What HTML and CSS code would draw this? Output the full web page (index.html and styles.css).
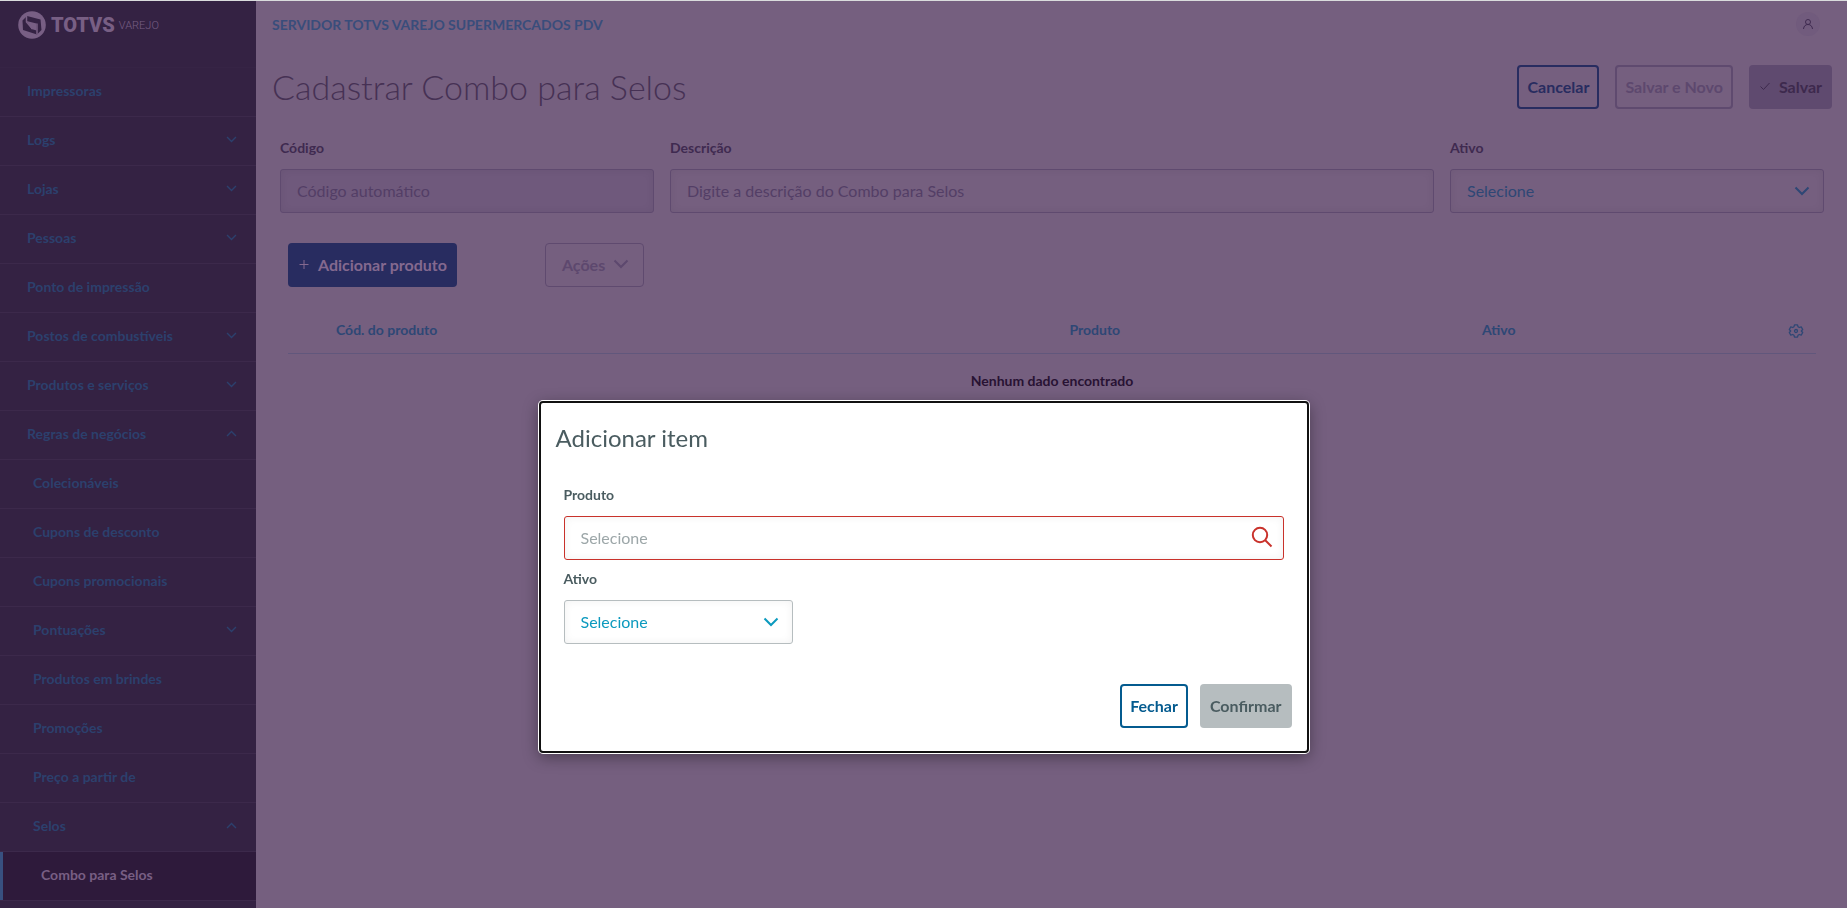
FILE: index.html
```html
<!DOCTYPE html>
<html lang="pt-BR">
<head>
  <meta charset="UTF-8">
  <title>Cadastrar Combo para Selos</title>
  <link rel="stylesheet" href="styles.css">
</head>
<body>

  <svg class="sprite" aria-hidden="true">
    <symbol id="down" viewBox="0 0 16 16"><path d="M1.500 4.500l6.500 6.500 6.500-6.500"/></symbol>
    <symbol id="up" viewBox="0 0 16 16"><path d="M1.500 11.500l6.500-6.500 6.500 6.500"/></symbol>
  </svg>

  <div class="app">
    <aside class="sidebar">
      <div class="brand">
        <svg class="brand-icon" viewBox="0 0 28 28">
          <circle class="light" cx="14" cy="14" r="13.800"/>
          <path class="dark" d="M4.500 9.500L9 5l13.500 3.500L23.500 19 19 23.500 5 19z"/>
          <path class="light" d="M8.500 10l10 2.500V19.500l-5-1.500z"/>
          <path d="M8.500 5v6l6 7M19 12.500v11" stroke-width="1.500"/>
        </svg>
        <span class="brand-name">TOTVS</span>
        <span class="brand-sub">VAREJO</span>
      </div>
      <nav>
        <ul class="menu">
          <li class="spacer"></li>
          <li><a href="#">Impressoras</a></li>
          <li><a href="#">Logs<svg><use href="#down"/></svg></a></li>
          <li><a href="#">Lojas<svg><use href="#down"/></svg></a></li>
          <li><a href="#">Pessoas<svg><use href="#down"/></svg></a></li>
          <li><a href="#">Ponto de impressão</a></li>
          <li><a href="#">Postos de combustíveis<svg><use href="#down"/></svg></a></li>
          <li><a href="#">Produtos e serviços<svg><use href="#down"/></svg></a></li>
          <li><a href="#">Regras de negócios<svg><use href="#up"/></svg></a></li>
          <li class="sub"><a href="#">Colecionáveis</a></li>
          <li class="sub"><a href="#">Cupons de desconto</a></li>
          <li class="sub"><a href="#">Cupons promocionais</a></li>
          <li class="sub"><a href="#">Pontuações<svg><use href="#down"/></svg></a></li>
          <li class="sub"><a href="#">Produtos em brindes</a></li>
          <li class="sub"><a href="#">Promoções</a></li>
          <li class="sub"><a href="#">Preço a partir de</a></li>
          <li class="sub"><a href="#">Selos<svg><use href="#up"/></svg></a></li>
          <li class="active"><a href="#">Combo para Selos</a></li>
        </ul>
      </nav>
    </aside>

    <main class="content">
      <header class="topbar">
        <span>SERVIDOR TOTVS VAREJO SUPERMERCADOS PDV</span>
        <button class="avatar" aria-label="Usuário">
          <svg viewBox="0 0 12 12"><circle cx="6" cy="4" r="2.500"/><path d="M1.500 11c.3-3 2-4.500 4.500-4.500s4.200 1.500 4.500 4.500"/></svg>
        </button>
      </header>

      <div class="page-head">
        <h1>Cadastrar Combo para Selos</h1>
        <div class="actions">
          <button class="btn btn-outline">Cancelar</button>
          <button class="btn btn-muted" disabled>Salvar e Novo</button>
          <button class="btn btn-filled" disabled><svg viewBox="0 0 12 12"><path d="M1.500 6.500l3 3 6-6.500"/></svg>Salvar</button>
        </div>
      </div>

      <form class="form">
        <div class="field">
          <label for="codigo">Código</label>
          <input id="codigo" type="text" placeholder="Código automático" disabled>
        </div>
        <div class="field">
          <label for="descricao">Descrição</label>
          <input id="descricao" type="text" placeholder="Digite a descrição do Combo para Selos">
        </div>
        <div class="field">
          <label for="ativo">Ativo</label>
          <div class="control">
            <select id="ativo"><option>Selecione</option></select>
            <svg class="chevron"><use href="#down"/></svg>
          </div>
        </div>
      </form>

      <section class="products">
        <div class="tools">
          <button class="btn btn-primary"><svg viewBox="0 0 12 12"><path d="M6 2v9M1.500 6.500h9"/></svg>Adicionar produto</button>
          <button class="btn btn-menu" disabled>Ações<svg><use href="#down"/></svg></button>
        </div>
        <table>
          <thead>
            <tr>
              <th class="col-check"></th>
              <th class="col-code">Cód. do produto</th>
              <th class="col-product">Produto</th>
              <th>Ativo</th>
              <th class="col-gear">
                <button class="gear" aria-label="Gerenciar colunas">
                  <svg viewBox="0 0 16 16"><path d="M6.500 1.800h3l.5 1.900 1.300.8 1.900-.6 1.500 2.600-1.400 1.500 1.400 1.500-1.500 2.600-1.900-.6-1.300.8-.5 1.900h-3L6 12.300l-1.300-.8-1.900.6-1.500-2.600L2.700 8 1.300 6.500l1.500-2.600 1.900.6L6 3.700z"/><circle cx="8" cy="8" r="1.500"/></svg>
                </button>
              </th>
            </tr>
          </thead>
          <tbody>
            <tr><td colspan="5">Nenhum dado encontrado</td></tr>
          </tbody>
        </table>
      </section>
    </main>
  </div>

  <div class="overlay">
    <div class="modal" role="dialog" aria-labelledby="modal-title">
      <h2 id="modal-title">Adicionar item</h2>
      <div class="modal-body">
        <div class="field">
          <label for="produto">Produto</label>
          <div class="control">
            <input id="produto" class="invalid" type="text" placeholder="Selecione">
            <svg class="search" viewBox="0 0 22 22"><circle cx="9" cy="9" r="7.200"/><path d="M14 14l6.500 6.500"/></svg>
          </div>
        </div>
        <div class="field third">
          <label for="item-ativo">Ativo</label>
          <div class="control">
            <select id="item-ativo"><option>Selecione</option></select>
            <svg class="chevron"><use href="#down"/></svg>
          </div>
        </div>
      </div>
      <div class="modal-footer">
        <button class="btn btn-outline">Fechar</button>
        <button class="btn btn-filled" disabled>Confirmar</button>
      </div>
    </div>
  </div>

</body>
</html>
```

FILE: styles.css
```css
* {
  box-sizing: border-box;
}
body {
  --text: #3f2a50;
  --link: #2e4775;
  --border: #5f4a6f;
  --primary: #282c60;
  margin: 0;
  font-family: Lato, "Open Sans", sans-serif;
  font-size: 16px;
  color: var(--text);
  background-color: #755f7f;
  border-top: 1px solid #dadcdd;
}
svg {
  fill: none;
  stroke: currentColor;
  stroke-width: 2;
}
.sprite {
  display: none;
}
.app {
  display: flex;
  height: calc(100vh - 1px);
  overflow: hidden;
}

/* menu lateral */
.sidebar {
  flex: none;
  width: 256px;
  background-color: #342243;
}
.brand {
  display: flex;
  align-items: center;
  height: 48px;
  padding-left: 18px;
  color: #785f84;
}
.brand-icon {
  width: 28px;
  height: 28px;
}
.brand-icon .light {
  fill: currentColor;
  stroke: none;
}
.brand-icon .dark {
  fill: #342243;
  stroke: none;
}
.brand-name {
  margin-left: 5px;
  font-family: Roboto, sans-serif;
  font-size: 20px;
  font-weight: 900;
}
.brand-sub {
  margin-left: 4px;
  font-family: Roboto, sans-serif;
  font-size: 11px;
  font-weight: 300;
}
.menu {
  margin: 0;
  padding: 0;
  list-style: none;
}
.menu li {
  height: 49px;
  border-bottom: 1px solid #3c294b;
}
.menu .spacer {
  height: 19px;
  border-bottom-color: #362445;
}
.menu a {
  display: flex;
  align-items: center;
  justify-content: space-between;
  height: 48px;
  padding: 0 19px 3px 27px;
  font-size: 14px;
  font-weight: bold;
  color: #2c406d;
  text-decoration: none;
}
.menu svg {
  width: 11px;
  height: 11px;
}
.menu .sub a {
  padding-left: 33px;
}
.menu .active {
  background-color: #2e1a3b;
}
.menu .active a {
  padding-left: 38px;
  border-left: 3px solid #385080;
  color: #785f84;
}

/* pagina */
.content {
  flex: 1;
  padding: 0 15px 0 16px;
}
.topbar {
  display: flex;
  align-items: center;
  justify-content: space-between;
  height: 48px;
  padding: 0 12px 2px 0;
  font-size: 14px;
  font-weight: bold;
  color: #394d7b;
}
.avatar {
  display: flex;
  align-items: center;
  justify-content: center;
  width: 24px;
  height: 24px;
  padding: 0;
  border: 0;
  border-radius: 50%;
  background-color: #715b7d;
  color: var(--text);
}
.avatar svg {
  width: 12px;
  height: 12px;
  stroke-width: 1;
}
.page-head {
  display: flex;
  align-items: center;
  justify-content: space-between;
  padding-top: 16px;
}
h1 {
  margin: 0;
  font-size: 34px;
  line-height: 44px;
  font-weight: 300;
  color: #463154;
}
.actions {
  display: flex;
  gap: 16px;
}
.btn {
  display: flex;
  align-items: center;
  justify-content: center;
  gap: 8px;
  height: 44px;
  padding: 0 8px 2px;
  border: 2px solid transparent;
  border-radius: 4px;
  background-color: transparent;
  font-family: inherit;
  font-size: 16px;
  font-weight: bold;
}
.btn svg {
  width: 12px;
  height: 12px;
  stroke-width: 1;
}
.btn-outline {
  border-color: var(--primary);
  color: var(--primary);
}
.btn-muted {
  border-color: var(--border);
  color: #5d486e;
}
.btn-filled {
  background-color: #5f4a6f;
  color: #3d294d;
}
.btn-primary {
  background-color: var(--primary);
  color: #84698f;
}
.btn-menu {
  padding: 0 14px 2px 16px;
  border: 1px solid var(--border);
  color: #5d486e;
}
.btn-menu svg {
  width: 16px;
  height: 16px;
  stroke-width: 2;
}

/* campos */
.form {
  display: grid;
  grid-template-columns: 1fr 2fr 1fr;
  padding-top: 30px;
}
.field {
  padding: 0 8px;
}
label {
  display: block;
  padding-bottom: 12px;
  font-size: 14px;
  line-height: 18px;
  font-weight: bold;
}
input,
select {
  display: block;
  width: 100%;
  height: 44px;
  padding: 0 16px 2px;
  border: 1px solid var(--border);
  border-radius: 3px;
  background-color: transparent;
  box-shadow: inset 0 0 8px rgba(0, 0, 0, 0.06);
  font-family: inherit;
  font-size: 16px;
  color: var(--link);
  appearance: none;
}
input:disabled {
  background-color: #6f597c;
}
input::placeholder {
  color: #533e66;
  opacity: 1;
}
.control {
  position: relative;
}
.chevron {
  position: absolute;
  top: 14px;
  right: 14px;
  width: 16px;
  height: 16px;
  color: var(--link);
}

/* tabela de produtos */
.products {
  padding: 30px 16px 0;
}
.tools {
  display: flex;
  gap: 88px;
}
table {
  width: 100%;
  margin-top: 22px;
  border-collapse: collapse;
  table-layout: fixed;
  font-size: 14px;
}
th {
  height: 44px;
  padding: 0 16px 2px;
  border-bottom: 1px solid #61577c;
  text-align: left;
  color: var(--link);
}
td {
  height: 56px;
  padding: 0 0 2px;
  text-align: center;
  font-weight: bold;
  color: #281233;
}
.col-check {
  width: 32px;
}
.col-code {
  width: 48%;
}
.col-product {
  width: 27%;
}
.col-gear {
  width: 40px;
  padding: 0 12px;
}
.gear {
  display: block;
  padding: 0;
  border: 0;
  background: none;
  color: inherit;
}
.gear svg {
  display: block;
  width: 16px;
  height: 16px;
  stroke-width: 1.3;
  stroke-linejoin: round;
}

/* janela */
.overlay {
  position: fixed;
  inset: 0;
  display: flex;
  align-items: flex-start;
  justify-content: center;
  padding-top: 401px;
}
.modal {
  --text: #4a5c60;
  --link: #0c9abe;
  --border: #b6bdbf;
  --primary: #045b8f;
  width: 770px;
  padding: 17px 15px 23px;
  border: 2px solid #111;
  border-radius: 4px;
  background-color: #fff;
  box-shadow: 0 0 0 1px #fff, 0 4px 16px rgba(0, 0, 0, 0.4);
  color: var(--text);
}
.modal h2 {
  margin: 0;
  font-size: 24px;
  line-height: 36px;
  font-weight: normal;
}
.modal-body {
  padding-top: 30px;
}
.modal .third {
  width: 33.33%;
  padding-top: 10px;
}
.modal input::placeholder {
  color: #9da7a9;
}
.modal .invalid {
  border-color: #c9322b;
}
.search {
  position: absolute;
  top: 10px;
  right: 11px;
  width: 22px;
  height: 22px;
  color: #c9322b;
}
.modal-footer {
  display: flex;
  justify-content: flex-end;
  gap: 12px;
  padding-top: 40px;
}
.modal .btn-filled {
  background-color: #b6bdbf;
  color: #4a5c60;
}
```
